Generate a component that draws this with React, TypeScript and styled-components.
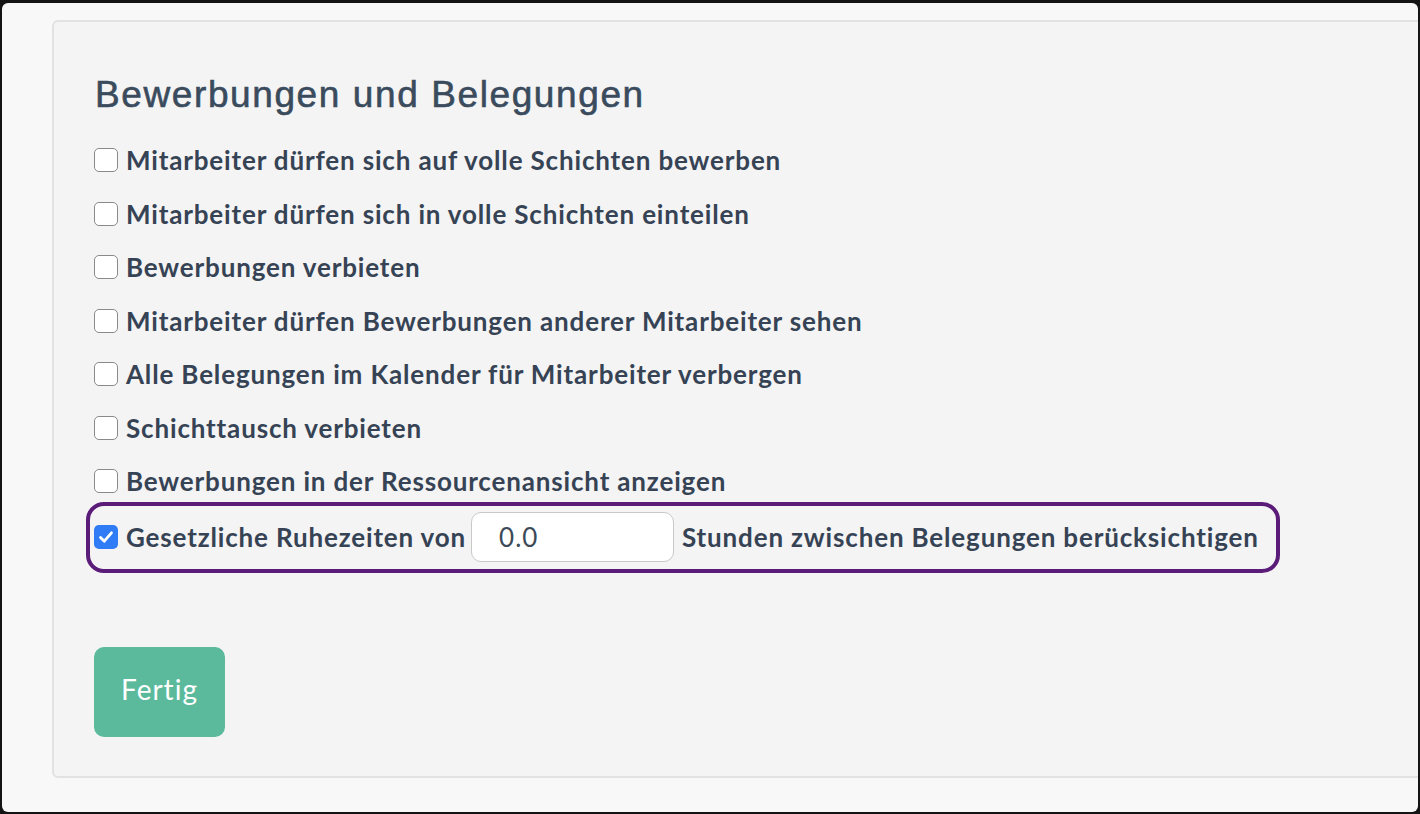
import React from "react";
import styled, { createGlobalStyle } from "styled-components";

const GlobalStyle = createGlobalStyle`
  html, body {
    margin: 0;
    padding: 0;
    background: #141414;
  }
  * {
    box-sizing: border-box;
  }
`;

const Window = styled.div`
  margin: 3px 2px 2px 2px;
  height: 809px;
  background: #f8f8f8;
  border-radius: 6px;
  overflow: hidden;
  padding: 17px 0 0 50px;
`;

const Panel = styled.section`
  margin-right: -20px;
  height: 758px;
  background: #f4f4f4;
  border: 2px solid #e2e2e2;
  border-radius: 6px;
  padding: 51px 0 0 40px;
  display: flex;
  flex-direction: column;
  align-items: flex-start;
`;

const Title = styled.h2`
  margin: 0 0 16px 1px;
  font-family: "Liberation Sans", Arial, sans-serif;
  font-weight: 400;
  font-size: 37px;
  line-height: 1.2;
  color: #3a4b5d;
  letter-spacing: 1.6px;
  -webkit-text-stroke: 0.6px #3a4b5d;
`;

const Row = styled.label<{ $highlight?: boolean }>`
  display: flex;
  align-items: center;
  height: ${(p) => (p.$highlight ? "71px" : "53.5px")};
  font-family: Lato, "Noto Sans", sans-serif;
  font-weight: 700;
  font-size: 26px;
  letter-spacing: 0.84px;
  color: #364354;
  white-space: nowrap;
  ${(p) =>
    p.$highlight &&
    `
    margin: -6px 0 0 -8px;
    padding: 0 17px 0 4px;
    border: 4px solid #5a1c78;
    border-radius: 18px;
  `}
`;

const Box = styled.span<{ $checked?: boolean }>`
  flex: none;
  width: 24px;
  height: 24px;
  margin-right: 8px;
  border-radius: 5px;
  border: ${(p) => (p.$checked ? "none" : "1.5px solid #8a8a8a")};
  background: ${(p) => (p.$checked ? "#2f7cf6" : "#fff")};
  display: flex;
  align-items: center;
  justify-content: center;
`;

const HoursInput = styled.span`
  flex: none;
  width: 203px;
  height: 50px;
  margin: 0 8px 0 5px;
  background: #fff;
  border: 1.5px solid #c9c9c9;
  border-radius: 10px;
  padding-left: 27px;
  display: flex;
  align-items: center;
  font-family: Lato, "Noto Sans", sans-serif;
  font-weight: 400;
  font-size: 26px;
  letter-spacing: 1px;
  color: #3d4a58;
`;

const DoneButton = styled.button`
  margin-top: 74px;
  width: 131px;
  height: 90px;
  border: none;
  border-radius: 10px;
  background: #5bba9b;
  color: #fff;
  font-family: Lato, "Noto Sans", sans-serif;
  font-size: 28px;
  letter-spacing: 1px;
  font-weight: 400;
  padding: 0 0 6px;
`;

const Check = () => (
  <svg width="18" height="18" viewBox="0 0 18 18">
    <path d="M3.5 9.5 L7.3 13.2 L14.5 4.8" fill="none" stroke="#fff" strokeWidth="2.8" strokeLinecap="round" strokeLinejoin="round" />
  </svg>
);

const options = [
  "Mitarbeiter dürfen sich auf volle Schichten bewerben",
  "Mitarbeiter dürfen sich in volle Schichten einteilen",
  "Bewerbungen verbieten",
  "Mitarbeiter dürfen Bewerbungen anderer Mitarbeiter sehen",
  "Alle Belegungen im Kalender für Mitarbeiter verbergen",
  "Schichttausch verbieten",
  "Bewerbungen in der Ressourcenansicht anzeigen",
];

export default function App() {
  return (
    <>
      <GlobalStyle />
      <Window>
        <Panel>
          <Title>Bewerbungen und Belegungen</Title>
          {options.map((text, index) => (
            <Row key={index}>
              <Box />
              {text}
            </Row>
          ))}
          <Row $highlight>
            <Box $checked>
              <Check />
            </Box>
            Gesetzliche Ruhezeiten von
            <HoursInput>0.0</HoursInput>
            Stunden zwischen Belegungen berücksichtigen
          </Row>
          <DoneButton>Fertig</DoneButton>
        </Panel>
      </Window>
    </>
  );
}
